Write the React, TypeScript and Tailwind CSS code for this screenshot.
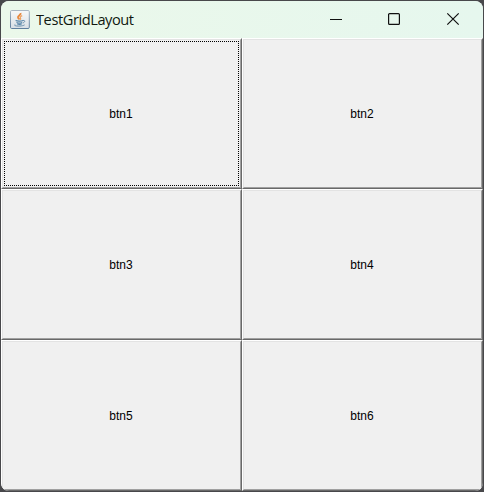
import React from "react";

const labels = ["btn1", "btn2", "btn3", "btn4", "btn5", "btn6"];

function JavaIcon() {
  return (
    <svg className="h-5 w-5 shrink-0" viewBox="0 0 20 20" fill="none">
      <defs>
        <linearGradient id="tile" x1="0" y1="0" x2="0" y2="1">
          <stop offset="0" stopColor="#f7f8f9" />
          <stop offset="1" stopColor="#d8dfe5" />
        </linearGradient>
        <linearGradient id="edge" x1="0" y1="0" x2="0" y2="1">
          <stop offset="0" stopColor="#a9b6c2" />
          <stop offset="1" stopColor="#5f7f9e" />
        </linearGradient>
      </defs>
      <rect x="0.5" y="0.5" width="18.8" height="18" rx="1.2" fill="url(#tile)" stroke="url(#edge)" />
      <path d="M10.6 3c.7 2.2-3.2 2.6-2.6 4.6.2.8 1 1.2 1.3 1.9" stroke="#e9883d" strokeWidth="1.8" />
      <path d="M12.2 5.7c-2 .8-2.4 1.6-1.7 2.5.4.6 0 1.2-.5 1.6" stroke="#eda266" strokeWidth="1.3" />
      <path d="M5.6 10.6c1.6.7 5.8.7 7.4-.1M6.5 12.4c1.5.6 4.5.6 5.7 0M7.2 14c1.2.4 3.5.4 4.5 0" stroke="#5483a7" strokeWidth="1.1" />
      <path d="M13 10.5c2.1-.6 2.6 1.5-.2 2.5" stroke="#6c91ad" strokeWidth="1" />
      <path d="M5.2 14.5c-3 1.8 6.8 2.2 9.4.4" stroke="#668eac" strokeWidth="1" />
    </svg>
  );
}

function GridButton({ label, focused }: { label: string; focused: boolean }) {
  return (
    <button className="border border-t-white border-l-white border-r-[#696969] border-b-[#696969]">
      <span className="block h-full border border-t-[#e3e3e3] border-l-[#e3e3e3] border-r-[#a0a0a0] border-b-[#a0a0a0] bg-[#f0f0f0] p-px">
        <span
          className={
            "flex h-full items-center justify-center border pt-px pr-px font-['Liberation_Sans',Arial,sans-serif] text-[12px] leading-none text-black " +
            (focused ? "border-dotted border-black" : "border-transparent")
          }
        >
          {label}
        </span>
      </span>
    </button>
  );
}

export default function App() {
  return (
    <div className="h-[492px] w-[484px] overflow-hidden bg-[#48484b] p-px">
      <div className="flex h-[490px] w-[482px] flex-col overflow-hidden rounded-[8px] bg-[#f0f0f0]">
        <header className="flex h-[37px] shrink-0 items-center bg-gradient-to-r from-[#ebf8ea] to-[#e6f7ee] pl-[9px]">
          <JavaIcon />
          <h1 className="mb-0.5 ml-1.5 origin-left scale-x-[0.975] whitespace-nowrap font-['Open_Sans','Noto_Sans',sans-serif] text-[15px] leading-5 tracking-[-0.45px] text-[#101810]">
            TestGridLayout
          </h1>
          <svg className="mr-[23px] mb-0.5 ml-auto h-[14px] w-[134px]" viewBox="0 0 134 14" fill="none" stroke="#101010" strokeWidth="1.2">
            <path d="M4 7.5h12" />
            <rect x="62.6" y="1.6" width="10.8" height="10.8" rx="1" />
            <path d="M121.3 1.3l11.4 11.4M132.7 1.3l-11.4 11.4" />
          </svg>
        </header>
        <main className="grid h-[453px] grid-cols-2 grid-rows-3">
          {labels.map((label, i) => (
            <GridButton key={label} label={label} focused={i === 0} />
          ))}
        </main>
      </div>
    </div>
  );
}
